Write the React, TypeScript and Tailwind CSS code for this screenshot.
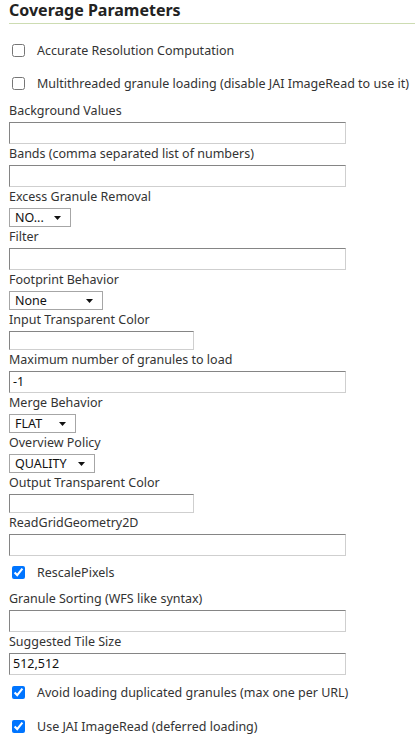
import React from 'react';

const font = { fontFamily: '"Noto Sans", "DejaVu Sans", sans-serif' };

function CheckRow({ label, checked, className }: { label: string; checked?: boolean; className?: string }) {
  return (
    <label className={`flex items-center h-[13px] text-[12.5px] text-[#333] ${className ?? ''}`}>
      <input type="checkbox" defaultChecked={checked} className="m-0 ml-[3px] mr-[12px] w-[13px] h-[13px]" />
      <span className="leading-[15px] whitespace-nowrap">{label}</span>
    </label>
  );
}

function FieldLabel({ text }: { text: string }) {
  return <div className="pt-[2px] pb-[4px] leading-[15px] text-[12.5px] text-[#333] whitespace-nowrap">{text}</div>;
}

function TextField({ label, value, short }: { label: string; value?: string; short?: boolean }) {
  return (
    <div>
      <FieldLabel text={label} />
      <div
        className={`${short ? 'w-[185px] h-[19px]' : 'w-[337px] h-[22px]'} border border-t-[#858585] border-l-[#858585] border-r-[#cfcfcf] border-b-[#cfcfcf] bg-white px-[3px] flex items-center text-[12.5px] text-[#111]`}
      >
        {value}
      </div>
    </div>
  );
}

function SelectField({ label, value, width }: { label: string; value: string; width: string }) {
  return (
    <div>
      <FieldLabel text={label} />
      <div className={`${width} h-[19px] border border-[#a6a6a6] bg-white flex items-center justify-between pl-[5px] pr-[9px] text-[12.5px] text-[#111]`}>
        <span className="leading-[15px]">{value}</span>
        <svg width="7" height="4" viewBox="0 0 7 4" className="shrink-0">
          <path d="M0 0 H7 L3.5 4 Z" fill="#111" />
        </svg>
      </div>
    </div>
  );
}

export default function App() {
  return (
    <div className="w-[415px] min-h-[743px] bg-white pl-[9px]" style={font}>
      <h2 className="text-[16px] font-bold leading-[21px] text-[#222] pb-[2px] border-b border-[#cddcb2] whitespace-nowrap">
        Coverage Parameters
      </h2>

      <CheckRow className="mt-[20px]" label="Accurate Resolution Computation" />
      <CheckRow className="mt-[20px]" label="Multithreaded granule loading (disable JAI ImageRead to use it)" />

      <div className="mt-[11px]">
        <TextField label="Background Values" />
        <TextField label="Bands (comma separated list of numbers)" />
        <SelectField label="Excess Granule Removal" value="NO..." width="w-[62px]" />
        <TextField label="Filter" />
        <SelectField label="Footprint Behavior" value="None" width="w-[94px]" />
        <TextField label="Input Transparent Color" short />
        <TextField label="Maximum number of granules to load" value="-1" />
        <SelectField label="Merge Behavior" value="FLAT" width="w-[67px]" />
        <SelectField label="Overview Policy" value="QUALITY" width="w-[86px]" />
        <TextField label="Output Transparent Color" short />
        <TextField label="ReadGridGeometry2D" />
      </div>

      <CheckRow className="mt-[10px]" label="RescalePixels" checked />

      <div className="mt-[10px]">
        <TextField label="Granule Sorting (WFS like syntax)" />
        <TextField label="Suggested Tile Size" value="512,512" />
      </div>

      <CheckRow className="mt-[11px]" label="Avoid loading duplicated granules (max one per URL)" checked />
      <CheckRow className="mt-[21px]" label="Use JAI ImageRead (deferred loading)" checked />
    </div>
  );
}
